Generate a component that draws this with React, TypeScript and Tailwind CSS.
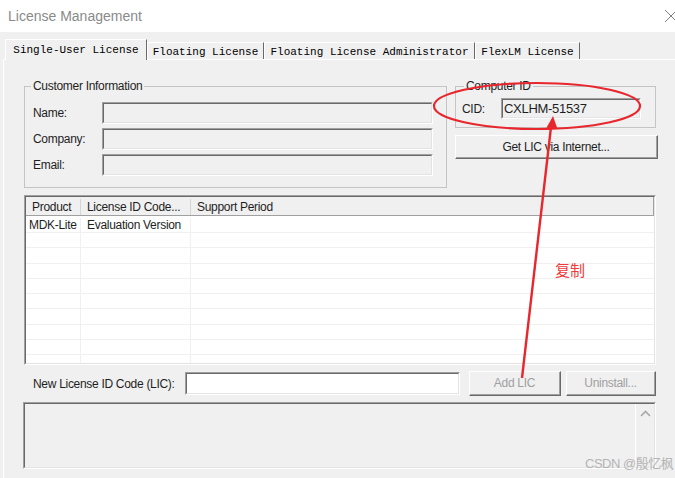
import React from 'react';

const tabs = [
  { label: 'Single-User License', w: 'w-[142px]', active: true },
  { label: 'Floating License', w: 'w-[117px]', active: false },
  { label: 'Floating License Administrator', w: 'w-[211px]', active: false },
  { label: 'FlexLM License', w: 'w-[105px]', active: false },
];

// classic sunken edit box
function Sunken({ className = '', children }: { className?: string; children?: React.ReactNode }) {
  return (
    <div className={`border border-t-[#a0a0a0] border-l-[#a0a0a0] border-r-white border-b-white ${className}`}>
      <div className="h-full w-full border border-t-[#696969] border-l-[#696969] border-r-[#e3e3e3] border-b-[#e3e3e3]">
        {children}
      </div>
    </div>
  );
}

function Button({ label, className = '', disabled = false }: { label: string; className?: string; disabled?: boolean }) {
  return (
    <div className={`border border-t-white border-l-white border-r-[#696969] border-b-[#696969] bg-[#f0f0f0] ${className}`}>
      <div className={`h-full w-full flex items-center justify-center border-r border-b border-[#a0a0a0] ${disabled ? 'text-[#a0a0a0]' : 'text-[#1e1e1e]'}`}>
        {label}
      </div>
    </div>
  );
}

function Field({ label }: { label: string }) {
  return (
    <div className="flex items-center">
      <span className="w-[69px]">{label}</span>
      <Sunken className="w-[331px] h-[22px] bg-[#f0f0f0]" />
    </div>
  );
}

const rows = [
  ['MDK-Lite', 'Evaluation Version', ''],
  ['', '', ''], ['', '', ''], ['', '', ''], ['', '', ''],
  ['', '', ''], ['', '', ''], ['', '', ''], ['', '', ''], ['', '', ''],
];

export default function App() {
  return (
    <div className="relative w-[675px] h-[478px] overflow-hidden bg-[#f0f0f0] font-['Liberation_Sans',Arial,sans-serif] text-[12px] tracking-[-0.3px] text-[#1e1e1e]">
      {/* Title bar */}
      <div className="h-[32px] bg-white flex items-center justify-between pl-[8px]">
        <span className="text-[14px] tracking-normal text-[#8a8a8a]">License Management</span>
        <svg width="14" height="14" viewBox="0 0 14 14" className="mr-[-3px]">
          <path d="M1 1 L13 13 M13 1 L1 13" stroke="#808080" strokeWidth="1" />
        </svg>
      </div>

      {/* Tabs */}
      <div className="flex items-end h-[27px] pl-[5px] font-['Liberation_Mono','Courier_New',monospace] text-[11px] tracking-normal text-black">
        {tabs.map(t => (
          <div
            key={t.label}
            className={`${t.w} flex items-center justify-center border-t border-l border-white border-r border-r-[#696969] ${
              t.active ? 'h-[21px] pt-[1px] relative z-10 bg-[#f0f0f0] -mb-[1px]' : 'h-[17px] pt-[2px]'
            }`}
          >
            {t.label}
          </div>
        ))}
      </div>

      {/* Tab page */}
      <div className="ml-[3px] h-[419px] border-t border-l border-white pt-[19px] pl-[20px]">
        <div className="flex">
          <fieldset className="w-[423px] border border-[#c4c4c4] pl-[8px] pr-[13px] pb-[11px]">
            <legend className="ml-[-2px] px-[2px] leading-[14px]">Customer Information</legend>
            <div className="flex flex-col gap-[4px] pt-[9px]">
              <Field label="Name:" />
              <Field label="Company:" />
              <Field label="Email:" />
            </div>
          </fieldset>

          <div className="ml-[8px] w-[203px] flex flex-col">
            <fieldset className="w-[201px] border border-[#c4c4c4] pl-[6px] pb-[8px]">
              <legend className="ml-[2px] px-[2px] leading-[14px]">Computer ID</legend>
              <div className="flex items-center pt-[5px]">
                <span className="w-[39px]">CID:</span>
                <Sunken className="w-[140px] h-[21px] bg-[#f0f0f0]">
                  <div className="pl-[1px] leading-[17px] text-[13px] text-[#1e1e1e]">CXLHM-51537</div>
                </Sunken>
              </div>
            </fieldset>
            <Button label="Get LIC via Internet..." className="mt-[7px] w-[203px] h-[24px]" />
          </div>
        </div>

        {/* License list */}
        <Sunken className="mt-[7px] w-[632px] h-[170px] bg-white">
          <div className="h-full overflow-hidden">
            <div className="flex h-[19px] pt-[2px] bg-[#f0f0f0] border-r border-b border-[#a0a0a0]">
              <div className="w-[55px] pl-[6px] flex items-center border-r border-[#d5d5d5]">Product</div>
              <div className="w-[110px] pl-[6px] flex items-center border-r border-[#d5d5d5]">License ID Code...</div>
              <div className="flex-1 pl-[6px] flex items-center">Support Period</div>
            </div>
            {rows.map((r, i) => (
              <div key={i} className={`flex border-b border-[#f0f0f0] ${i === 0 ? 'h-[17px] pt-[2px]' : 'h-[15.3px]'}`}>
                <div className="w-[55px] pl-[3px] flex items-center border-r border-[#f0f0f0]">{r[0]}</div>
                <div className="w-[110px] pl-[6px] flex items-center border-r border-[#f0f0f0]">{r[1]}</div>
                <div className="flex-1">{r[2]}</div>
              </div>
            ))}
          </div>
        </Sunken>

        {/* New LIC row */}
        <div className="mt-[6px] flex items-center h-[25px]">
          <span className="ml-[9px] w-[152px]">New License ID Code (LIC):</span>
          <Sunken className="w-[275px] h-[23px] bg-white" />
          <Button label="Add LIC" disabled className="ml-[9px] w-[92px] h-[25px]" />
          <Button label="Uninstall..." disabled className="ml-[5px] w-[90px] h-[25px]" />
        </div>

        {/* Status text */}
        <Sunken className="mt-[6px] -ml-[1px] w-[633px] h-[67px] bg-[#f0f0f0]">
          <div className="h-full flex justify-end">
            <div className="w-[19px] h-full border-l border-white flex justify-center pt-[6px]">
              <svg width="11" height="7" viewBox="0 0 11 7">
                <path d="M1 6 L5.5 1.5 L10 6" fill="none" stroke="#a8a8a8" strokeWidth="1.6" />
              </svg>
            </div>
          </div>
        </Sunken>
      </div>

      {/* Red annotation */}
      <svg className="absolute inset-0 pointer-events-none" width="675" height="478">
        <ellipse cx="537" cy="106" rx="103" ry="23" fill="none" stroke="#e8262d" strokeWidth="2.2" />
        <line x1="522" y1="378" x2="551" y2="127" stroke="#e8262d" strokeWidth="2.4" />
        <path d="M553 116 L557.5 129 L546.5 127.7 Z" fill="#e8262d" />
      </svg>
      <span className="absolute left-[555px] top-[261px] text-[15px] leading-[18px] tracking-normal text-[#ee3b3b] font-['Noto_Sans_CJK_SC',sans-serif]">
        复制
      </span>
      <span className="absolute left-[585px] top-[456px] text-[13px] leading-[16px] tracking-[-0.5px] text-[#b4b4b4] font-['Liberation_Sans','Noto_Sans_CJK_SC',sans-serif]">
        CSDN @殷忆枫
      </span>
    </div>
  );
}
